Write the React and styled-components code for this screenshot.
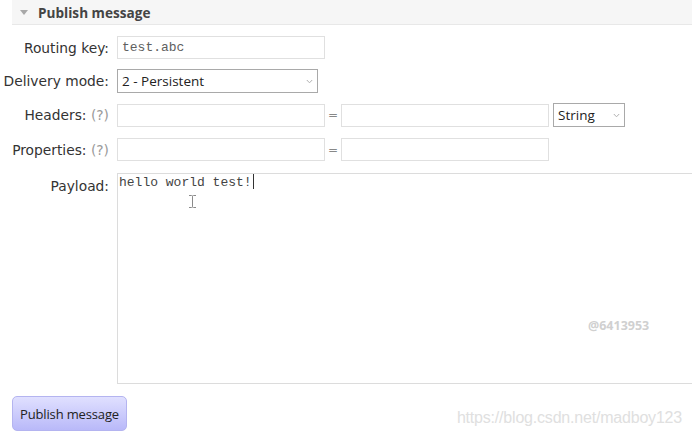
import React from "react";
import styled, { createGlobalStyle } from "styled-components";

const Global = createGlobalStyle`
  html, body {
    margin: 0;
    padding: 0;
    background: #fff;
    overflow: hidden;
  }
  body {
    font-family: "DejaVu Sans", Verdana, sans-serif;
    font-size: 14px;
    color: #333;
  }
`;

const Page = styled.div`
  width: 692px;
  height: 441px;
  overflow: hidden;
  position: relative;
`;

const SectionHeader = styled.div`
  margin-left: 12px;
  height: 24px;
  background: #f6f6f6;
  border-bottom: 1px solid #e8e8e8;
  display: flex;
  align-items: center;
  gap: 10px;
  padding-left: 8px;
  font-family: "Open Sans", sans-serif;
  font-weight: 700;
  font-size: 13.6px;
  color: #444;
`;

const Triangle = styled.span`
  width: 0;
  height: 0;
  border-left: 4px solid transparent;
  border-right: 4px solid transparent;
  border-top: 5px solid #a8a8a8;
  margin-top: 1px;
`;

const Form = styled.div`
  display: flex;
  flex-direction: column;
  padding-top: 11px;
`;

const Row = styled.div`
  display: grid;
  grid-template-columns: 109px 1fr;
  column-gap: 8px;
  align-items: ${(p) => (p.$top ? "start" : "center")};
  margin-bottom: ${(p) => p.$gap || 0}px;
`;

const Label = styled.label`
  text-align: right;
  white-space: nowrap;
  color: #333;
  font-size: 13.8px;
  padding-top: ${(p) => (p.$top ? "5px" : "0")};
`;

const Help = styled.span`
  color: #9a9a9a;
`;

const Fields = styled.div`
  display: flex;
  align-items: center;
`;

const TextInput = styled.div`
  box-sizing: border-box;
  width: ${(p) => p.$w || 208}px;
  height: 23px;
  border: 1px solid #e0e0e0;
  background: #fff;
  font-family: "Liberation Mono", monospace;
  font-size: 13px;
  color: #606060;
  padding: 2px 4px;
  line-height: 17px;
`;

const Equals = styled.span`
  width: 16px;
  text-align: center;
  color: #888;
  font-size: 12px;
`;

const Select = styled.div`
  box-sizing: border-box;
  width: ${(p) => p.$w}px;
  height: 24px;
  margin-left: ${(p) => p.$ml || 0}px;
  border: 1px solid #a9a9a9;
  background: #fff;
  display: flex;
  align-items: center;
  justify-content: space-between;
  padding: 0 4px 0 4px;
  font-family: "Open Sans", sans-serif;
  font-size: 13.5px;
  color: #222;
`;

const Chevron = () => (
  <svg width="7" height="5" viewBox="0 0 7 5">
    <path d="M0.8 1 L3.5 3.8 L6.2 1" fill="none" stroke="#b0b0b0" strokeWidth="1" />
  </svg>
);

const Payload = styled.div`
  position: relative;
  box-sizing: border-box;
  width: 620px;
  height: 211px;
  border: 1px solid #dcdcdc;
  background: #fff;
  font-family: "Liberation Mono", monospace;
  font-size: 13px;
  color: #444;
  padding: 0 0 0 1px;
  line-height: 17px;
`;

const Caret = styled.span`
  display: inline-block;
  width: 1px;
  height: 15px;
  background: #333;
  vertical-align: -3px;
  margin-left: 1px;
`;

const IBeam = styled.svg`
  position: absolute;
  left: 70px;
  top: 21px;
`;

const Stamp = styled.span`
  position: absolute;
  left: 470px;
  top: 143px;
  font-family: "Open Sans", sans-serif;
  font-weight: 700;
  font-size: 12.5px;
  color: #d0d0d0;
`;

const Footer = styled.div`
  display: flex;
  align-items: center;
  justify-content: space-between;
  padding: 12px 10px 0 12px;
`;

const PublishButton = styled.button`
  box-sizing: border-box;
  width: 115px;
  height: 35px;
  border: 1px solid #b4b4f0;
  border-radius: 5px;
  background: linear-gradient(#e0e0ff, #b9b9f9);
  font-family: "Open Sans", sans-serif;
  font-size: 13px;
  letter-spacing: -0.15px;
  color: #222;
  padding: 0;
`;

const Watermark = styled.span`
  font-family: "Liberation Sans", Arial, sans-serif;
  font-size: 16px;
  letter-spacing: -0.2px;
  color: #e0e0e0;
  margin-top: 9px;
`;

export default function App() {
  return (
    <Page>
      <Global />
      <SectionHeader>
        <Triangle />
        Publish message
      </SectionHeader>
      <Form>
        <Row $gap={10}>
          <Label>Routing key:</Label>
          <Fields>
            <TextInput>test.abc</TextInput>
          </Fields>
        </Row>
        <Row $gap={10}>
          <Label>Delivery mode:</Label>
          <Fields>
            <Select $w={201}>
              2 - Persistent
              <Chevron />
            </Select>
          </Fields>
        </Row>
        <Row $gap={11}>
          <Label>
            Headers: <Help>(?)</Help>
          </Label>
          <Fields>
            <TextInput />
            <Equals>=</Equals>
            <TextInput />
            <Select $w={72} $ml={4}>
              String
              <Chevron />
            </Select>
          </Fields>
        </Row>
        <Row $gap={12}>
          <Label>
            Properties: <Help>(?)</Help>
          </Label>
          <Fields>
            <TextInput />
            <Equals>=</Equals>
            <TextInput />
          </Fields>
        </Row>
        <Row $top>
          <Label $top>Payload:</Label>
          <Payload>
            hello world test!<Caret />
            <IBeam width="9" height="13" viewBox="0 0 9 13">
              <path d="M1 0.5 H3.5 Q4.5 0.5 4.5 1.5 V11.5 Q4.5 12.5 3.5 12.5 H1 M8 0.5 H5.5 Q4.5 0.5 4.5 1.5 M4.5 11.5 Q4.5 12.5 5.5 12.5 H8" fill="none" stroke="#8a8a8a" strokeWidth="1" />
            </IBeam>
            <Stamp>@6413953</Stamp>
          </Payload>
        </Row>
      </Form>
      <Footer>
        <PublishButton>Publish message</PublishButton>
        <Watermark>https://blog.csdn.net/madboy123</Watermark>
      </Footer>
    </Page>
  );
}
